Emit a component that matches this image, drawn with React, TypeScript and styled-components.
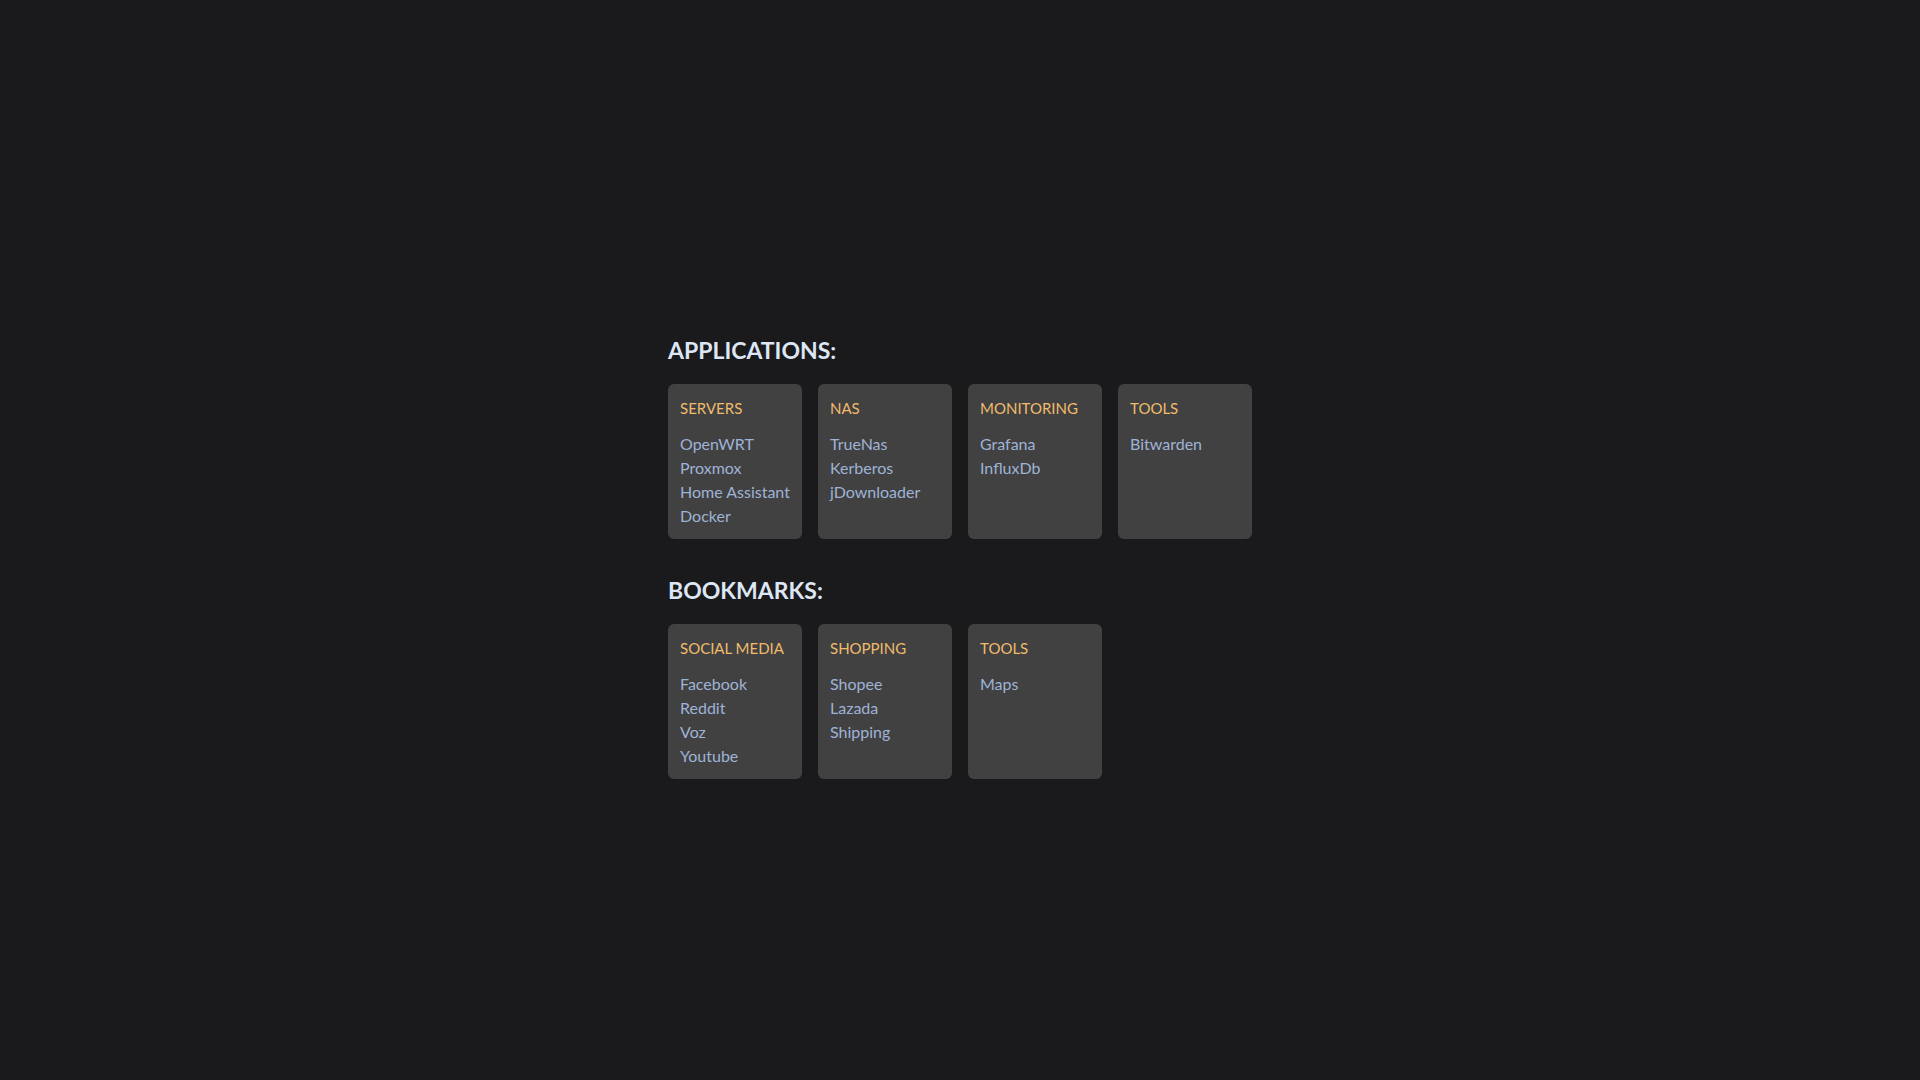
import React from 'react'
import styled, { createGlobalStyle } from 'styled-components'

const GlobalStyle = createGlobalStyle`
  html, body {
    margin: 0;
    padding: 0;
    background: #1a191c;
  }
  body {
    font-family: Lato, "Open Sans", sans-serif;
  }
`

interface Group {
  name: string
  links: string[]
}

const applications: Group[] = [
  { name: 'SERVERS', links: ['OpenWRT', 'Proxmox', 'Home Assistant', 'Docker'] },
  { name: 'NAS', links: ['TrueNas', 'Kerberos', 'jDownloader'] },
  { name: 'MONITORING', links: ['Grafana', 'InfluxDb'] },
  { name: 'TOOLS', links: ['Bitwarden'] },
]

const bookmarks: Group[] = [
  { name: 'SOCIAL MEDIA', links: ['Facebook', 'Reddit', 'Voz', 'Youtube'] },
  { name: 'SHOPPING', links: ['Shopee', 'Lazada', 'Shipping'] },
  { name: 'TOOLS', links: ['Maps'] },
]

const Page = styled.div`
  min-height: 1080px;
  display: flex;
  justify-content: center;
  padding-top: 334px;
  box-sizing: border-box;
`

const Content = styled.main`
  width: 584px;
`

const Section = styled.section`
  margin-bottom: 35px;
`

const SectionTitle = styled.h2`
  margin: 0 0 18px;
  font-size: 23px;
  font-weight: 700;
  line-height: 32px;
  color: #dde6f4;
`

const Grid = styled.div`
  display: grid;
  grid-template-columns: repeat(4, 134px);
  gap: 16px;
`

const Card = styled.div`
  height: 155px;
  box-sizing: border-box;
  padding: 13px 12px;
  background: #414141;
  border-radius: 6px;
`

const CardTitle = styled.div`
  font-size: 15px;
  line-height: 22px;
  color: #efbb6c;
  margin-bottom: 13px;
  white-space: nowrap;
`

const LinkList = styled.ul`
  list-style: none;
  margin: 0;
  padding: 0;
`

const LinkItem = styled.li`
  font-size: 16px;
  line-height: 24px;
  color: #9fb3d6;
  white-space: nowrap;
`

const GroupSection: React.FC<{ title: string; groups: Group[] }> = ({ title, groups }) => (
  <Section>
    <SectionTitle>{title}</SectionTitle>
    <Grid>
      {groups.map((g) => (
        <Card key={g.name}>
          <CardTitle>{g.name}</CardTitle>
          <LinkList>
            {g.links.map((l) => (
              <LinkItem key={l}>{l}</LinkItem>
            ))}
          </LinkList>
        </Card>
      ))}
    </Grid>
  </Section>
)

const App: React.FC = () => (
  <>
    <GlobalStyle />
    <Page>
      <Content>
        <GroupSection title="APPLICATIONS:" groups={applications} />
        <GroupSection title="BOOKMARKS:" groups={bookmarks} />
      </Content>
    </Page>
  </>
)

export default App
